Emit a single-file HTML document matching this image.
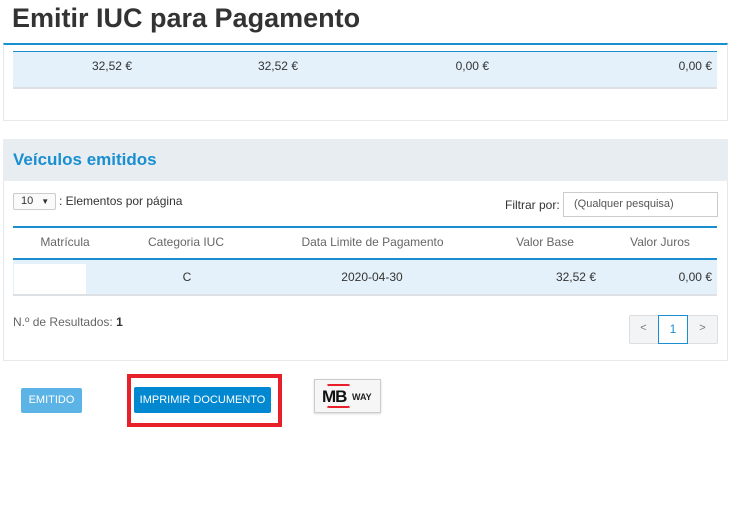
<!DOCTYPE html>
<html><head><meta charset="utf-8"><style>
*{margin:0;padding:0;box-sizing:border-box}
body{width:743px;height:525px;background:#fff;font-family:"Liberation Sans",sans-serif;font-size:12px;color:#333;position:relative;overflow:hidden}
.a{position:absolute;white-space:nowrap}
.r{text-align:right}
.c{text-align:center}
</style></head><body>
<div class="a" style="left:12px;top:3px;font-size:27px;font-weight:bold;color:#333">Emitir IUC para Pagamento</div>
<div class="a" style="left:3px;top:43px;width:725px;height:78px;border:1px solid #e6e9ec;border-top:2px solid #1a8fd0"></div>
<div class="a" style="left:13px;top:51px;width:704px;height:38px;background:#e5f1fa;border-top:1px solid #1a8fd0;border-bottom:2px solid #dde1e5"></div>
<div class="a r" style="left:40px;width:92px;top:59px">32,52 €</div>
<div class="a r" style="left:200px;width:98px;top:59px">32,52 €</div>
<div class="a r" style="left:400px;width:89px;top:59px">0,00 €</div>
<div class="a r" style="left:600px;width:112px;top:59px">0,00 €</div>

<div class="a" style="left:3px;top:139px;width:725px;height:222px;border:1px solid #e6e9ec"></div>
<div class="a" style="left:3px;top:139px;width:725px;height:42px;background:#e8edf2"></div>
<div class="a" style="left:13px;top:150px;font-size:17px;font-weight:bold;color:#1a8fd0">Veículos emitidos</div>
<div class="a" style="left:13px;top:193px;width:43px;height:17px;border:1px solid #ccc;border-radius:2px;background:#fafafa;font-size:11px;padding:1px 0 0 7px">10 <span style="font-size:8px;margin-left:5px">▼</span></div>
<div class="a" style="left:59px;top:194px">: Elementos por página</div>
<div class="a" style="left:505px;top:198px">Filtrar por:</div>
<div class="a" style="left:563px;top:192px;width:155px;height:25px;border:1px solid #ccc;font-size:11px;color:#555;padding:5px 0 0 10px">(Qualquer pesquisa)</div>
<div class="a" style="left:13px;top:226px;width:704px;height:34px;border-top:2px solid #1a8fd0;border-bottom:2px solid #1a8fd0"></div>
<div class="a c" style="left:20px;width:90px;top:235px;color:#666">Matrícula</div>
<div class="a c" style="left:136px;width:100px;top:235px;color:#666">Categoria IUC</div>
<div class="a c" style="left:290px;width:165px;top:235px;color:#666">Data Limite de Pagamento</div>
<div class="a c" style="left:500px;width:90px;top:235px;color:#666">Valor Base</div>
<div class="a c" style="left:615px;width:90px;top:235px;color:#666">Valor Juros</div>
<div class="a" style="left:13px;top:260px;width:704px;height:36px;background:#e5f1fa;border-bottom:2px solid #dde1e5"></div>
<div class="a" style="left:14px;top:264px;width:72px;height:30px;background:#fff"></div>
<div class="a c" style="left:177px;width:20px;top:270px">C</div>
<div class="a c" style="left:322px;width:100px;top:270px">2020-04-30</div>
<div class="a r" style="left:500px;width:96px;top:270px">32,52 €</div>
<div class="a r" style="left:620px;width:92px;top:270px">0,00 €</div>
<div class="a" style="left:13px;top:315px;color:#666">N.º de Resultados: <b style="color:#333">1</b></div>
<div class="a" style="left:629px;top:315px;width:89px;height:29px;border:1px solid #ddd;background:#f3f4f5;border-radius:2px"></div>
<div class="a c" style="left:629px;width:29px;top:322px;font-size:11px;color:#777">&lt;</div>
<div class="a c" style="left:658px;top:315px;width:30px;height:29px;border:1px solid #1a8fd0;background:#fff;color:#1a8fd0;padding-top:6px">1</div>
<div class="a c" style="left:688px;width:29px;top:322px;font-size:11px;color:#777">&gt;</div>

<div class="a c" style="left:21px;top:388px;width:61px;height:25px;background:#5bb4e5;color:#fff;font-size:11px;padding-top:6px;border-radius:2px">EMITIDO</div>
<div class="a" style="left:127px;top:374px;width:155px;height:53px;border:4px solid #e8202a"></div>
<div class="a c" style="left:134px;top:387px;width:137px;height:26px;background:#0288d1;color:#fff;font-size:11px;padding-top:7px;border-radius:2px">IMPRIMIR DOCUMENTO</div>
<div class="a" style="left:314px;top:379px;width:67px;height:34px;border:1px solid #ccc;background:#f6f6f6;box-shadow:0 1px 2px rgba(0,0,0,.15)"></div>
<div class="a" style="left:326px;top:384px;width:25px;height:24px;border:2px solid #e8202a;border-radius:3px;border-left-color:transparent;border-right-color:transparent"></div>
<div class="a" style="left:322px;top:387px;font-size:17px;font-weight:bold;color:#111;letter-spacing:-1px">MB</div>
<div class="a" style="left:352px;top:392px;font-size:9px;font-weight:bold;color:#222">WAY</div>
</body></html>
